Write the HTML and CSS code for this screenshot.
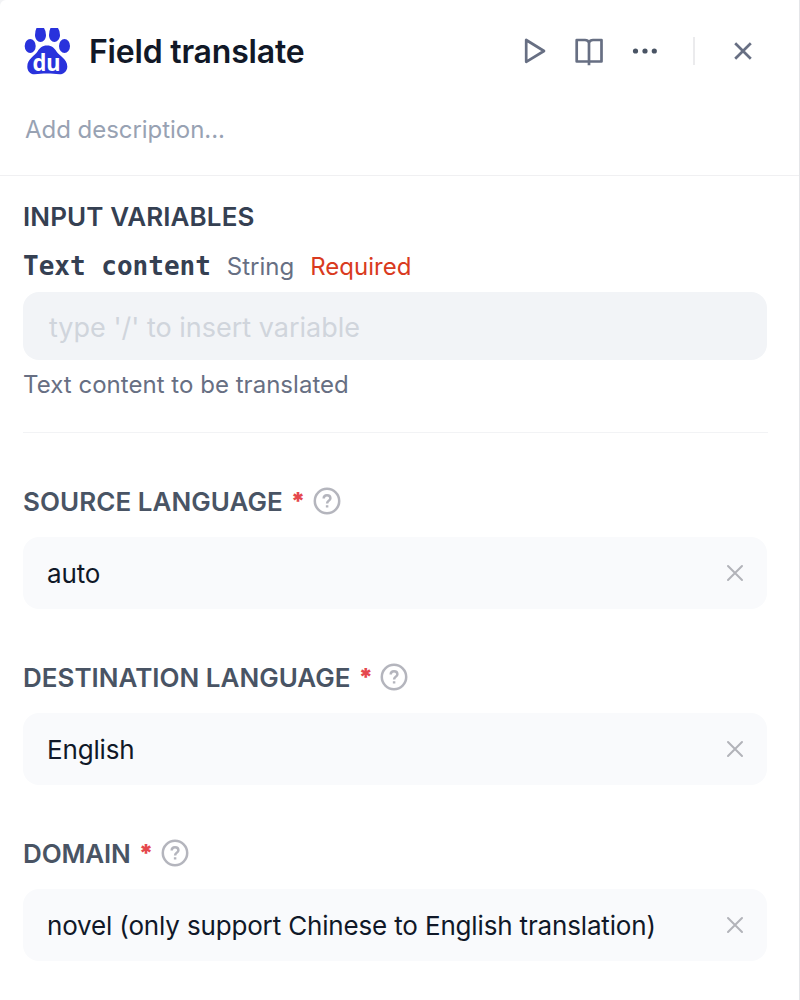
FILE: index.html
```html
<!DOCTYPE html>
<html lang="en">
<head>
<meta charset="utf-8">
<title>Field translate</title>
<link rel="stylesheet" href="styles.css">
</head>
<body>
<main class="panel">
  <header class="header">
    <div class="title-row">
      <svg class="logo" width="46" height="48" viewBox="0 0 46 48">
        <g fill="#2932dc">
          <path d="M12.500 0H20Q22 3 22 7C22 11 19.500 14 16.500 14C13.500 14 11 11 11 7Q11 3 12.500 0Z"/>
          <path d="M26.500 0H34Q36 3 36 7C36 11 33 14 30.500 14C27.500 14 25 11 25 7Q25 3 26.500 0Z"/>
          <ellipse cx="6.200" cy="18" rx="5.500" ry="7.100"/>
          <ellipse cx="40.500" cy="18" rx="5.500" ry="7.100"/>
          <path d="M23 17.400C18 17.400 15.500 20 13.500 23.500C11 27.500 3.300 31 3.300 38.500C3.300 43 6 46.300 10.500 46.300C15 46.300 18 45.600 23 45.600C28 45.600 31 46.300 35.500 46.300C40 46.300 43.300 43 43.300 38.500C43.300 31 35 27.500 32.500 23.500C30.500 20 28 17.400 23 17.400Z"/>
        </g>
        <text class="logo-text" x="8.500" y="43.300" textLength="28" lengthAdjust="spacingAndGlyphs">du</text>
      </svg>
      <h1 class="title">Field translate</h1>
      <div class="actions">
        <svg width="28" height="32" viewBox="0 0 28 32" class="icon"><path d="M5.200 5V26.800L23 16Z"/></svg>
        <svg width="32" height="32" viewBox="0 0 32 32" class="icon"><path d="M3.700 5H12Q15 5 16 7.500Q17 5 20 5H28.500V26.500H3.700ZM16 7.500V30.300"/></svg>
        <svg width="32" height="32" viewBox="0 0 32 32" class="dots"><circle cx="6.500" cy="16" r="2.600"/><circle cx="16" cy="16" r="2.600"/><circle cx="25.300" cy="16" r="2.600"/></svg>
        <span class="divider"></span>
        <svg width="20" height="20" viewBox="0 0 20 20" class="icon"><path d="M2.200 2.200L17.800 17.800M17.800 2.200L2.200 17.800"/></svg>
      </div>
    </div>
    <p class="description">Add description...</p>
  </header>
  <section class="inputs">
    <h2 class="heading">INPUT VARIABLES</h2>
    <div class="variable">
      <span class="name">Text content</span>
      <span class="type">String</span>
      <span class="required">Required</span>
    </div>
    <div class="entry">type '/' to insert variable</div>
    <p class="hint">Text content to be translated</p>
  </section>
  <section class="field">
    <div class="label"><span class="label-text">SOURCE LANGUAGE</span><span class="star">*</span>
      <svg class="help" width="28" height="28" viewBox="0 0 28 28"><circle cx="14" cy="14" r="12.200"/><path d="M10.700 11.500C10.700 9.500 12 8.200 14 8.200S17.400 9.400 17.400 11.200C17.400 13.600 14.100 13.700 14.100 16.400M14.100 18.300V20.600"/></svg>
    </div>
    <div class="value"><span>auto</span><svg class="clear" width="20" height="20" viewBox="0 0 20 20"><path d="M3 3L17 17M17 3L3 17"/></svg></div>
  </section>
  <section class="field">
    <div class="label"><span class="label-text destination">DESTINATION LANGUAGE</span><span class="star">*</span>
      <svg class="help" width="28" height="28" viewBox="0 0 28 28"><circle cx="14" cy="14" r="12.200"/><path d="M10.700 11.500C10.700 9.500 12 8.200 14 8.200S17.400 9.400 17.400 11.200C17.400 13.600 14.100 13.700 14.100 16.400M14.100 18.300V20.600"/></svg>
    </div>
    <div class="value"><span>English</span><svg class="clear" width="20" height="20" viewBox="0 0 20 20"><path d="M3 3L17 17M17 3L3 17"/></svg></div>
  </section>
  <section class="field">
    <div class="label"><span class="label-text domain">DOMAIN</span><span class="star">*</span>
      <svg class="help" width="28" height="28" viewBox="0 0 28 28"><circle cx="14" cy="14" r="12.200"/><path d="M10.700 11.500C10.700 9.500 12 8.200 14 8.200S17.400 9.400 17.400 11.200C17.400 13.600 14.100 13.700 14.100 16.400M14.100 18.300V20.600"/></svg>
    </div>
    <div class="value"><span>novel (only support Chinese to English translation)</span><svg class="clear" width="20" height="20" viewBox="0 0 20 20"><path d="M3 3L17 17M17 3L3 17"/></svg></div>
  </section>
</main>
</body>
</html>
```
FILE: styles.css
```css
* { box-sizing: border-box; margin: 0; }
body { background: #f2f3f5; font-family: Inter, "Liberation Sans", sans-serif; }
.panel { height: 1000px; overflow: hidden; background: #fff; border-right: 1px solid #e4e5e8; border-top-left-radius: 6px; }
.header { height: 176px; padding: 28px 46px 0 24px; border-bottom: 1px solid #f0f0f2; }
.title-row { display: flex; align-items: center; height: 48px; }
.logo { flex: none; overflow: visible; }
.logo-text { font: 700 23px "Noto Sans", sans-serif; fill: #fff; }
.title { margin-left: 19px; font-size: 32px; font-weight: 600; line-height: 48px; letter-spacing: -0.2px; color: #111827; white-space: nowrap; }
.actions { display: flex; align-items: center; margin-left: auto; margin-top: -2px; }
.icon { fill: none; stroke: #676f83; stroke-width: 2.700; stroke-linejoin: round; }
.actions svg + svg { margin-left: 24px; }
.dots { fill: #495464; }
.divider { width: 2px; height: 28px; margin: 0 38px 0 32px; background: #ebebed; }
.description { margin-top: 36px; padding-left: 1px; font-size: 24px; line-height: 36px; letter-spacing: -0.04px; color: #98a2b3; white-space: nowrap; }
.inputs { height: 257px; margin: 0 31px 0 23px; padding-top: 23px; border-bottom: 1px solid #f2f3f5; }
.heading { font-size: 26px; font-weight: 600; line-height: 36px; letter-spacing: 0.1px; color: #354052; white-space: nowrap; }
.variable { display: flex; align-items: baseline; height: 57px; padding-top: 13px; line-height: 36px; white-space: nowrap; font-size: 24px; }
.name { font: 700 26px/36px "DejaVu Sans Mono", monospace; color: #354052; }
.type { margin-left: 16px; color: #676f83; }
.required { margin-left: 16px; color: #d93a20; }
.entry { height: 68px; margin-right: 1px; padding-left: 26px; border-radius: 16px; background: #f2f4f7; color: #d0d5dc; font-size: 27px; line-height: 72px; }
.hint { margin-top: 7px; font-size: 24px; line-height: 36px; letter-spacing: 0.03px; color: #676f83; white-space: nowrap; }
.field { margin: 0 32px 0 23px; padding-top: 50px; height: 176px; }
.label { display: flex; align-items: center; height: 36px; }
.label-text { padding-top: 2px; font-size: 26px; font-weight: 600; line-height: 36px; letter-spacing: 0.05px; color: #495464; white-space: nowrap; }
.destination { letter-spacing: 0; }
.domain { letter-spacing: -0.15px; }
.star { width: 12px; margin-left: 8px; padding-top: 2px; font-size: 24px; font-weight: 900; line-height: 36px; color: #e5484d; }
.help { margin-left: 10px; fill: none; stroke: #b4b5bd; stroke-width: 2.500; }
.value { display: flex; align-items: center; justify-content: space-between; height: 72px; margin-top: 18px; padding: 0 22px 0 24px; border-radius: 16px; background: #f9fafc; color: #101828; font-size: 26px; letter-spacing: -0.16px; white-space: nowrap; }
.clear { fill: none; stroke: #b2b3b9; stroke-width: 2; stroke-linecap: round; }
```
